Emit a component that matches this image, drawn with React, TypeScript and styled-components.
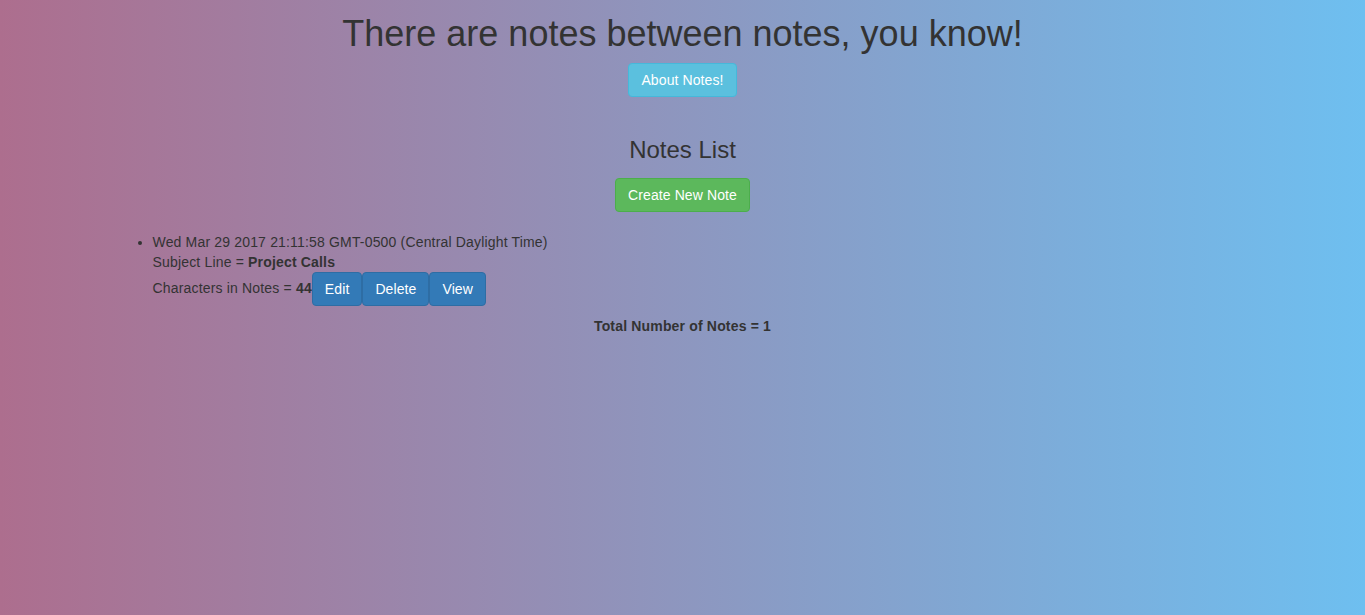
import React from "react";
import styled, { createGlobalStyle } from "styled-components";

const Global = createGlobalStyle`
  html, body { margin: 0; padding: 0; height: 100%; }
  body {
    font-family: "Liberation Sans", Arial, Helvetica, sans-serif;
    font-size: 14px;
    line-height: 1.42857143;
    color: #333;
    background: linear-gradient(to right, #ad6e8e 0%, #6ebff0 100%);
    min-height: 100vh;
  }
  #root { min-height: 100vh; }
`;

const Container = styled.div`
  width: 1170px;
  margin: 0 auto;
  padding: 0 15px;
  box-sizing: border-box;
  letter-spacing: 0.17px;
`;

const Center = styled.div`
  text-align: center;
`;

const Title = styled.h1`
  font-size: 36px;
  font-weight: 400;
  line-height: 1.1;
  letter-spacing: 0;
  margin: 14px 0 9px;
`;

const SubTitle = styled.h3`
  font-size: 24px;
  font-weight: 400;
  line-height: 1.1;
  letter-spacing: 0;
  margin: 40px 0 15px;
`;

const variants = {
  info: { bg: "#5bc0de", border: "#46b8da" },
  success: { bg: "#5cb85c", border: "#4cae4c" },
  primary: { bg: "#337ab7", border: "#2e6da4" },
};

const Button = styled.button<{ $variant: keyof typeof variants }>`
  display: inline-block;
  font-family: "Liberation Sans", Arial, Helvetica, sans-serif;
  font-size: 14px;
  line-height: 20px;
  letter-spacing: 0.1px;
  padding: 6px 12px;
  border-radius: 4px;
  border: 1px solid ${(p) => variants[p.$variant].border};
  background: ${(p) => variants[p.$variant].bg};
  color: #fff;
  vertical-align: middle;
  cursor: pointer;
  margin: 0;
`;

const List = styled.ul`
  margin: 20px 0 10px;
  padding-left: 40px;
`;

const Item = styled.li``;

const Total = styled.div`
  text-align: center;
  font-weight: 700;
`;

export default function App() {
  return (
    <>
      <Global />
      <Container>
        <Center>
          <Title>There are notes between notes, you know!</Title>
          <Button $variant="info">About Notes!</Button>
          <SubTitle>Notes List</SubTitle>
          <Button $variant="success">Create New Note</Button>
        </Center>
        <List>
          <Item>
            Wed Mar 29 2017 21:11:58 GMT-0500 (Central Daylight Time)
            <br />
            Subject Line = <b>Project Calls</b>
            <br />
            Characters in Notes = <b>44</b>
            <Button $variant="primary">Edit</Button>
            <Button $variant="primary">Delete</Button>
            <Button $variant="primary">View</Button>
          </Item>
        </List>
        <Total>Total Number of Notes = 1</Total>
      </Container>
    </>
  );
}
